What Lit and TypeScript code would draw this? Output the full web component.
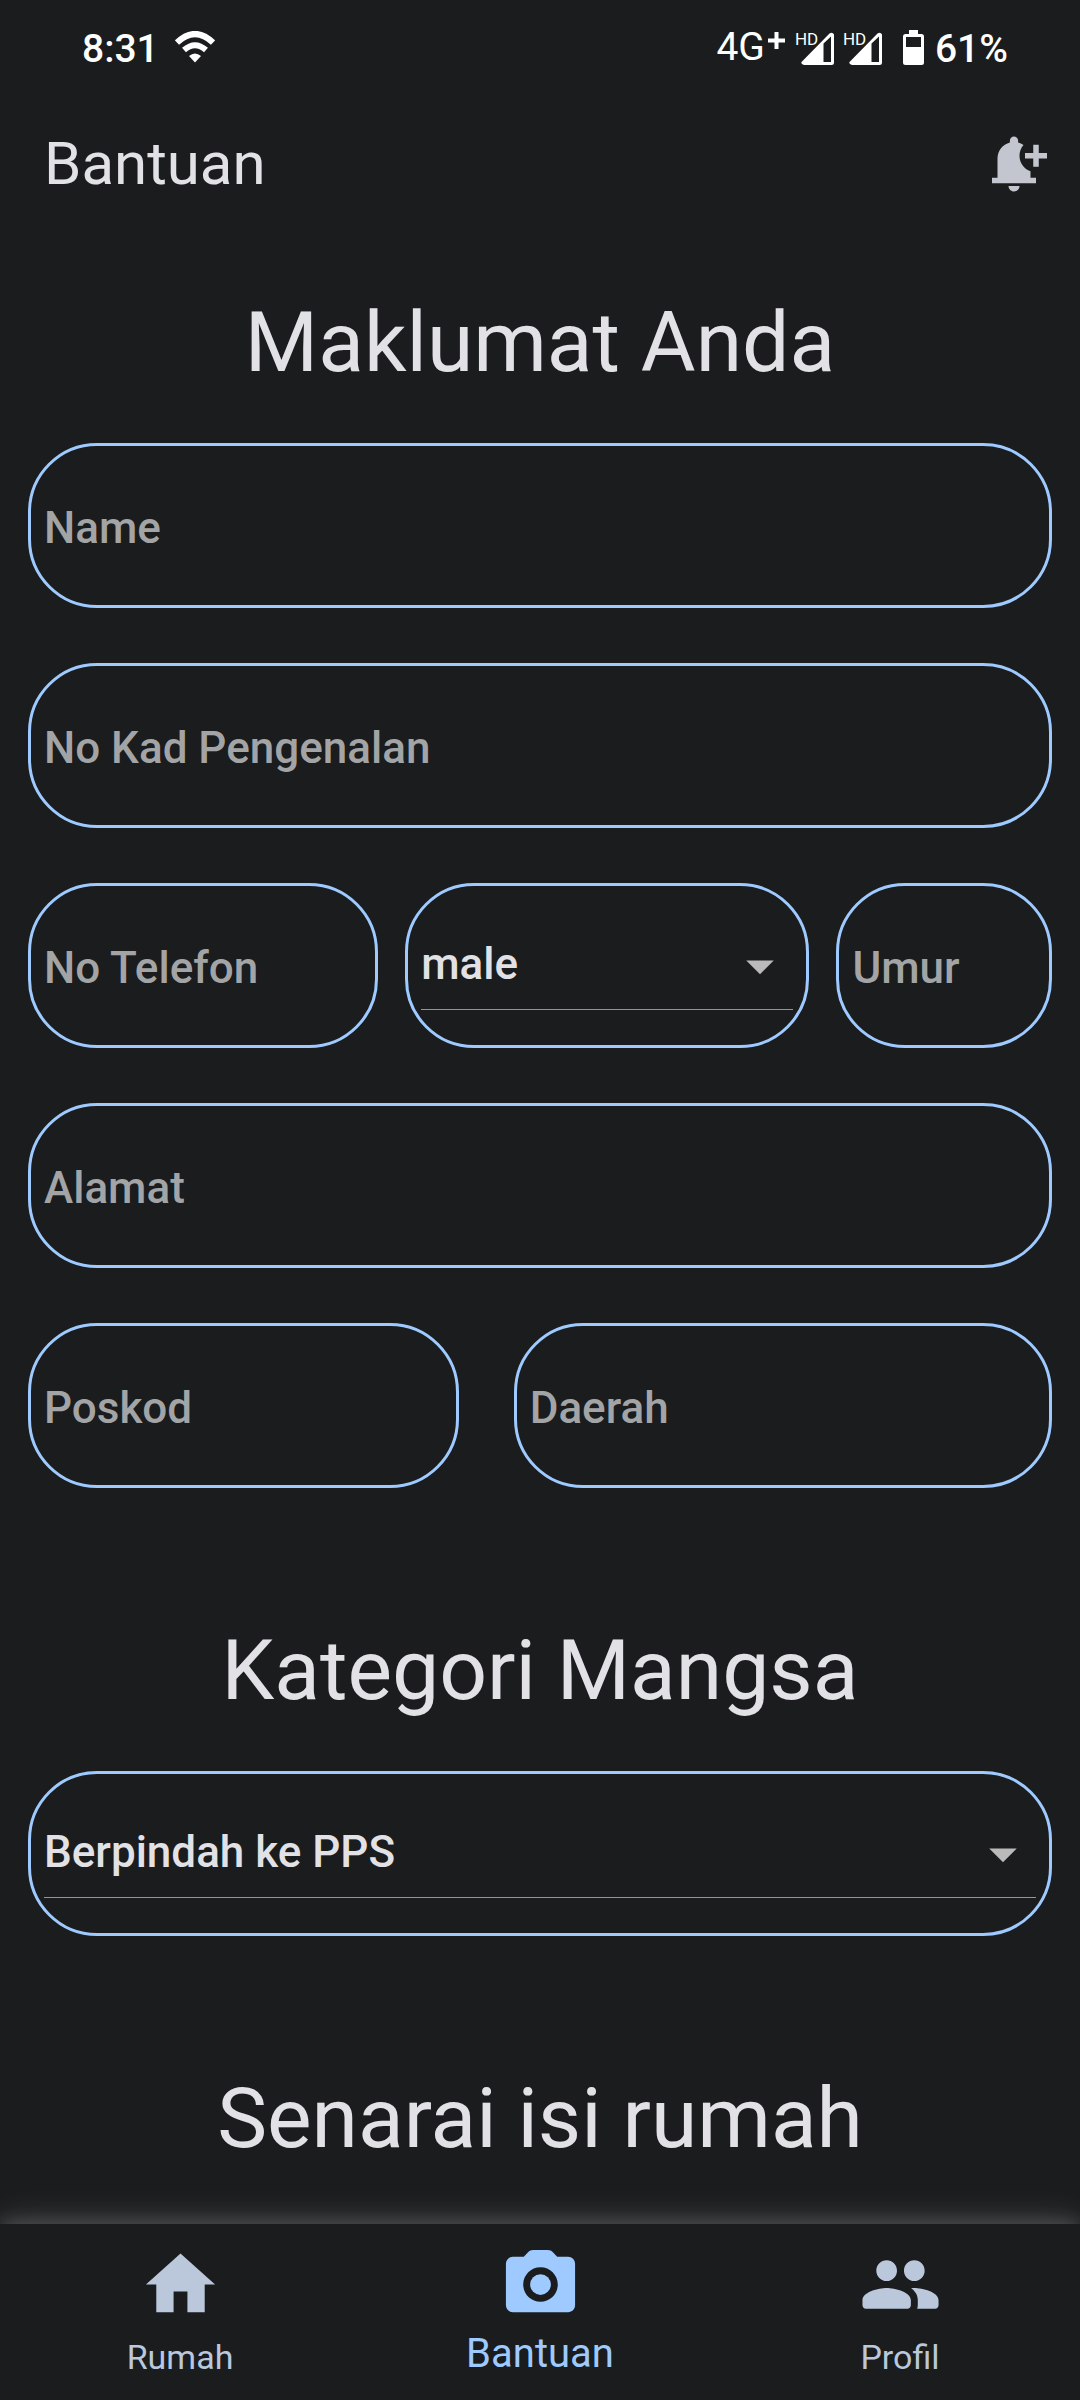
import { LitElement, html, css, svg } from "lit";
import { customElement, property, state } from "lit/decorators.js";

const ICONS = {
  home: svg`<path d="M10 20v-6h4v6h5v-8h3L12 3 2 12h3v8z"/>`,
  camera: svg`<circle cx="12" cy="12" r="3"/><path d="M20 4h-3.17l-1.24-1.35c-.37-.41-.91-.65-1.47-.65H9.88c-.56 0-1.1.24-1.48.65L7.17 4H4c-1.1 0-2 .9-2 2v12c0 1.1.9 2 2 2h16c1.1 0 2-.9 2-2V6c0-1.1-.9-2-2-2zm-8 13c-2.76 0-5-2.24-5-5s2.24-5 5-5 5 2.24 5 5-2.24 5-5 5z"/>`,
  people: svg`<path d="M16 11c1.66 0 2.99-1.34 2.99-3S17.66 5 16 5s-3 1.34-3 3 1.34 3 3 3zm-8 0c1.66 0 2.99-1.34 2.99-3S9.66 5 8 5 5 6.34 5 8s1.34 3 3 3zm0 2c-2.33 0-7 1.17-7 3.5V18c0 .55.45 1 1 1h12c.55 0 1-.45 1-1v-1.5c0-2.33-4.67-3.5-7-3.5zm8 0c-.29 0-.62.02-.97.05.02.01.03.03.04.04 1.14.83 1.93 1.94 1.93 3.41V18c0 .35-.07.69-.18 1H22c.55 0 1-.45 1-1v-1.5c0-2.33-4.67-3.5-7-3.5z"/>`,
  bellPlus: svg`<path d="M10 20h4c0 1.1-.9 2-2 2s-2-.9-2-2zm4-11c0 2.61 1.67 4.83 4 5.66V17h2v2H4v-2h2v-7c0-2.79 1.91-5.14 4.5-5.8v-.7c0-.83.67-1.5 1.5-1.5s1.5.67 1.5 1.5v.7c.71.18 1.36.49 1.95.9C14.54 6.14 14 7.51 14 9zm10-1h-3V5h-2v3h-3v2h3v3h2v-3h3V8z"/>`,
};

/* ---------- Status bar ---------- */

@customElement("status-bar")
export class StatusBar extends LitElement {
  static styles = css`
    :host {
      display: flex;
      align-items: center;
      justify-content: space-between;
      height: 88px;
      padding: 10px 72px 0 82px;
      box-sizing: border-box;
      color: #fff;
      font-size: 39px;
      font-weight: 500;
      line-height: 46px;
    }
    .group {
      display: flex;
      align-items: center;
    }
    .wifi {
      width: 40px;
      height: 32px;
      margin: 0 0 4px 16px;
    }
    .network {
      display: flex;
      align-items: flex-start;
      font-weight: 400;
      padding-bottom: 4px;
    }
    .plus {
      width: 17px;
      height: 17px;
      margin: 8px 10px 0 3px;
    }
    .sim {
      display: grid;
      width: 39px;
      height: 36px;
      margin: 0 9px 4px 0;
    }
    .hd,
    .signal {
      grid-area: 1 / 1;
    }
    .hd {
      font-size: 17px;
      font-weight: 400;
      line-height: 20px;
    }
    .signal {
      width: 33px;
      height: 33px;
      justify-self: end;
      align-self: end;
    }
    .battery {
      width: 21px;
      height: 35px;
      margin: 0 11px 4px 12px;
    }
  `;

  private sim() {
    return html`
      <span class="sim">
        <span class="hd">HD</span>
        <svg class="signal" viewBox="0 0 33 33" aria-hidden="true">
          <path fill="#fff" d="M2 28.500 28.500 1.500Q31.500-.5 33 2.500V30.500Q33 33 30.500 33H3Q-.5 32 .5 30zM22.500 11.500V30H30V4.500z" fill-rule="evenodd"/>
        </svg>
      </span>
    `;
  }

  render() {
    return html`
      <div class="group">
        <span>8:31</span>
        <svg class="wifi" viewBox="0 0 40 32" aria-hidden="true" fill="none" stroke="#fff" stroke-width="6">
          <path d="M2 11.500Q20-5.500 38 11.500"/>
          <path d="M9 19Q20 9.500 31 19"/>
          <path d="M14 25Q20 20 26 25L20 31.500z" fill="#fff" stroke="none"/>
        </svg>
      </div>
      <div class="group">
        <span class="network">
          <span>4G</span>
          <svg class="plus" viewBox="0 0 17 17" aria-hidden="true">
            <path d="M8.500 0v17M0 8.500h17" stroke="#fff" stroke-width="4"/>
          </svg>
        </span>
        ${this.sim()}${this.sim()}
        <svg class="battery" viewBox="0 0 21 35" aria-hidden="true">
          <path fill="#fff" fill-rule="evenodd" d="M6 0h9v4h3.500Q21 4 21 6.500V32.500Q21 35 18.500 35H2.500Q0 35 0 32.500V6.500Q0 4 2.500 4H6zM3 7v10h15V7z"/>
        </svg>
        <span>61%</span>
      </div>
    `;
  }
}

/* ---------- Form fields ---------- */

const fieldBox = css`
  :host {
    display: grid;
    min-width: 0;
    height: 165px;
    box-sizing: border-box;
    padding: 0 13px;
    border: 3px solid #9ecaff;
    border-radius: 69px;
  }
`;

@customElement("text-field")
export class TextField extends LitElement {
  @property() label = "";

  static styles = [
    fieldBox,
    css`
      .input {
        width: 100%;
        min-width: 0;
        box-sizing: border-box;
        padding: 4px 0 0;
        border: 0;
        outline: 0;
        background: none;
        color: #e2e2e6;
        font: inherit;
        font-size: 44px;
        font-weight: 500;
      }
      .input::placeholder {
        color: #a3a4a5;
        opacity: 1;
      }
    `,
  ];

  render() {
    return html`<input class="input" type="text" placeholder=${this.label} aria-label=${this.label} />`;
  }
}

@customElement("select-field")
export class SelectField extends LitElement {
  @property() label = "";
  @property({ attribute: false }) options: string[] = [];

  static styles = [
    fieldBox,
    css`
      :host {
        align-content: center;
      }
      .select,
      .arrow {
        grid-area: 1 / 1;
      }
      .select {
        width: 100%;
        height: 88px;
        padding: 0 66px 2px 0;
        border: 0;
        border-bottom: 1px solid #949596;
        border-radius: 0;
        outline: 0;
        appearance: none;
        background: none;
        color: #e2e2e6;
        font: inherit;
        font-size: 44px;
        font-weight: 500;
      }
      .arrow {
        width: 66px;
        height: 66px;
        place-self: center end;
        fill: #bababb;
        pointer-events: none;
      }
    `,
  ];

  render() {
    return html`
      <select class="select" aria-label=${this.label}>
        ${this.options.map((option) => html`<option>${option}</option>`)}
      </select>
      <svg class="arrow" viewBox="0 0 24 24" aria-hidden="true"><path d="M7 10l5 5 5-5z"/></svg>
    `;
  }
}

/* ---------- Bottom navigation ---------- */

@customElement("bottom-nav")
export class BottomNav extends LitElement {
  @state() private current = "Bantuan";

  private items = [
    { label: "Rumah", icon: ICONS.home },
    { label: "Bantuan", icon: ICONS.camera },
    { label: "Profil", icon: ICONS.people },
  ];

  static styles = css`
    :host {
      display: block;
      position: relative;
      background: #1a1c1e;
      box-shadow: 0 -4px 16px rgba(255, 255, 255, 0.14), 0 -4px 36px rgba(255, 255, 255, 0.14);
    }
    .bar {
      display: grid;
      grid-template-columns: repeat(3, 1fr);
    }
    .tab {
      display: flex;
      flex-direction: column;
      align-items: center;
      height: 176px;
      padding: 19px 0 0;
      border: 0;
      background: none;
      color: #bbc7db;
      font: inherit;
      font-size: 34px;
      line-height: 46px;
      cursor: pointer;
    }
    .icon {
      width: 83px;
      height: 83px;
      margin-bottom: 8px;
      fill: currentColor;
    }
    .tab[aria-current="page"] {
      color: #9ecaff;
      font-size: 40px;
      line-height: 40px;
    }
  `;

  render() {
    return html`
      <nav class="bar">
        ${this.items.map(
          ({ label, icon }) => html`
            <button
              class="tab"
              type="button"
              aria-current=${label === this.current ? "page" : "false"}
              @click=${() => (this.current = label)}
            >
              <svg class="icon" viewBox="0 0 24 24" aria-hidden="true">${icon}</svg>
              <span>${label}</span>
            </button>
          `,
        )}
      </nav>
    `;
  }
}

/* ---------- Page ---------- */

@customElement("app-root")
export class AppRoot extends LitElement {
  static styles = css`
    :host {
      display: flex;
      flex-direction: column;
      height: 100vh;
      overflow: hidden;
      background: #1a1c1e;
      color: #e2e2e6;
      font-family: Roboto, "Liberation Sans", sans-serif;
    }
    .appbar {
      display: flex;
      align-items: center;
      justify-content: space-between;
      height: 152px;
      padding: 0 33px 0 44px;
    }
    .title {
      margin: 0;
      font-size: 60px;
      font-weight: 400;
      line-height: 72px;
    }
    .alert {
      display: flex;
      padding: 0;
      border: 0;
      background: none;
      color: #c3c6cf;
      cursor: pointer;
    }
    .alert-icon {
      width: 66px;
      height: 66px;
      fill: currentColor;
    }
    .content {
      flex: 1;
      min-height: 0;
      overflow: auto;
      scrollbar-width: none;
      padding: 0 28px;
    }
    .section {
      display: grid;
      gap: 55px;
      padding: 58px 0 80px;
    }
    .section:last-child {
      padding-bottom: 0;
    }
    .heading {
      margin: 0;
      font-size: 84px;
      font-weight: 400;
      line-height: 90px;
      text-align: center;
    }
    .contact {
      display: grid;
      grid-template-columns: 13fr 15fr 8fr;
      gap: 27px;
    }
    .area {
      display: grid;
      grid-template-columns: 4fr 5fr;
      gap: 55px;
    }
  `;

  render() {
    return html`
      <status-bar></status-bar>
      <header class="appbar">
        <h1 class="title">Bantuan</h1>
        <button class="alert" type="button" aria-label="Tambah notifikasi">
          <svg class="alert-icon" viewBox="0 0 24 24" aria-hidden="true">${ICONS.bellPlus}</svg>
        </button>
      </header>
      <main class="content">
        <section class="section">
          <h2 class="heading">Maklumat Anda</h2>
          <text-field label="Name"></text-field>
          <text-field label="No Kad Pengenalan"></text-field>
          <div class="contact">
            <text-field label="No Telefon"></text-field>
            <select-field label="Jantina" .options=${["male", "female"]}></select-field>
            <text-field label="Umur"></text-field>
          </div>
          <text-field label="Alamat"></text-field>
          <div class="area">
            <text-field label="Poskod"></text-field>
            <text-field label="Daerah"></text-field>
          </div>
        </section>
        <section class="section">
          <h2 class="heading">Kategori Mangsa</h2>
          <select-field label="Kategori Mangsa" .options=${["Berpindah ke PPS"]}></select-field>
        </section>
        <section class="section">
          <h2 class="heading">Senarai isi rumah</h2>
        </section>
      </main>
      <bottom-nav></bottom-nav>
    `;
  }
}
